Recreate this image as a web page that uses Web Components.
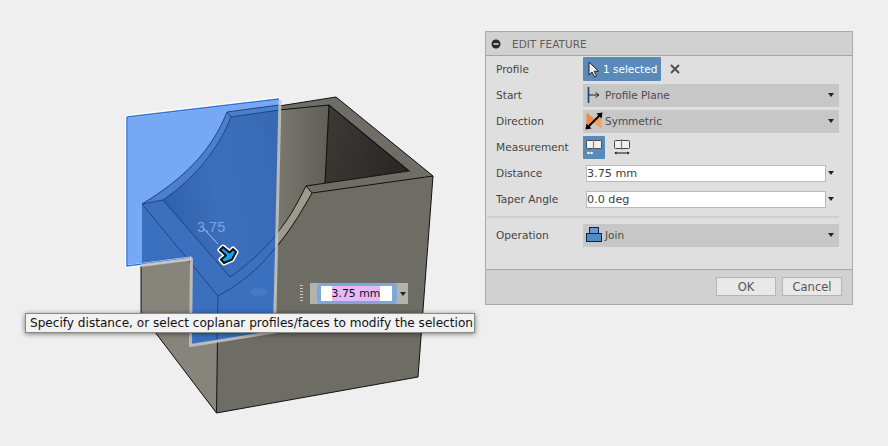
<!DOCTYPE html>
<html><head><meta charset="utf-8"><style>
html,body{margin:0;padding:0;background:#efefef;width:888px;height:446px;overflow:hidden;font-family:"DejaVu Sans",sans-serif}
</style></head><body>
<x-scene></x-scene>
<x-mini value="3.75 mm"></x-mini>
<x-tip>Specify distance, or select coplanar profiles/faces to modify the selection</x-tip>
<x-panel title="EDIT FEATURE">
  <x-row label="Profile"><x-chip>1 selected</x-chip></x-row>
  <x-row label="Start"><x-select icon="start">Profile Plane</x-select></x-row>
  <x-row label="Direction"><x-select icon="sym">Symmetric</x-select></x-row>
  <x-row label="Measurement"><x-measure></x-measure></x-row>
  <x-row label="Distance"><x-field>3.75 mm</x-field></x-row>
  <x-row label="Taper Angle"><x-field>0.0 deg</x-field></x-row>
  <x-sep></x-sep>
  <x-row label="Operation"><x-select icon="join">Join</x-select></x-row>
</x-panel>
<script>
const ICONS={
start:`<svg width="16" height="18" viewBox="0 0 16 18"><path d="M2.500 1v16" stroke="#1d3f6e" stroke-width="1.600"/><path d="M3 9h9" stroke="#222" stroke-width="1"/><path d="M9.500 6.500 13 9l-3.500 2.500" fill="none" stroke="#222" stroke-width="1"/></svg>`,
sym:`<svg width="18" height="18" viewBox="0 0 18 18"><path d="M1.500 .5 11 8 3.500 15 1.500 13Z" fill="#f08c42"/><path d="M16.500 16.500 7 10 14 3 16.500 4Z" fill="#f3a066"/><path d="M3.500 14.500 14.500 3.500" stroke="#000" stroke-width="2"/><path d="M.5 17.500 1.500 11.500 6.500 16.500ZM17.500 .5 11.500 1.500 16.500 6.500Z" fill="#000"/></svg>`,
join:`<svg width="18" height="18" viewBox="0 0 18 18"><rect x="4.500" y="1.500" width="9" height="8" fill="#5f9bd6" stroke="#0f2438"/><rect x="1.500" y="7.500" width="15" height="8" fill="#4f8cc9" stroke="#0f2438"/></svg>`};
function def(name,html,init){customElements.define(name,class extends HTMLElement{constructor(){super();this.attachShadow({mode:"open"}).innerHTML=typeof html==="function"?html(this):html;}connectedCallback(){if(init)init(this)}})}
const caret=`<svg width="6" height="4" viewBox="0 0 6 4"><path d="M0 0h6L3 4Z" fill="#222"/></svg>`;

def("x-scene",`<style>:host{position:absolute;left:0;top:0;width:888px;height:446px;display:block}svg{display:block}</style>
<svg width="888" height="446" viewBox="0 0 888 446">
<defs>
<linearGradient id="inner" x1="0" y1="0" x2="1" y2="0"><stop offset="0" stop-color="#7a7970"/><stop offset="1" stop-color="#5f5e57"/></linearGradient>
<linearGradient id="pit" x1="0" y1="0" x2="1" y2="0.300"><stop offset="0" stop-color="#3c3b36"/><stop offset="1" stop-color="#2a2925"/></linearGradient>
<linearGradient id="floor" x1="0" y1="0.600" x2="1" y2="0.300"><stop offset="0" stop-color="#2f60ac"/><stop offset=".45" stop-color="#3c6fbb"/><stop offset="1" stop-color="#386ab4"/></linearGradient>
</defs>
<path d="M281 110 336 97 433 176 418 377 216.500 413 155 332 141 314V204Z" fill="#6d6c65"/>
<path d="M141 262V314L155 332 216.500 413 218 296 190 250Z" fill="#87857b"/>
<path d="M281 110 329 105 325 183 306 186C296 206 288 220 277 233Z" fill="url(#inner)"/>
<path d="M329 105 409 171 325 183Z" fill="url(#pit)"/>
<path d="M279 106 336 97 433 176 312 193 306 186 409 171 329 105 279 110Z" fill="#6f6e66"/>
<path d="M306 186 312 193C298 218 288 233 276 246V233C288 220 296 206 306 186Z" fill="#9e9b8c"/>
<g fill="none" stroke="#111" stroke-width="1">
<path d="M279 106 336 97 433 176M312 193 433 176"/>
<path d="M279 110 329 105 409 171 306 186M329 105 325 183" stroke-width="1.100"/>
<path d="M306 186 312 193"/>
<path d="M306 186C296 206 288 220 277 233M312 193C298 218 288 233 277 246"/>
<path d="M433 176 418 377 216.500 413 155 332"/>
<path d="M141 262V314L155 332"/>
<path d="M218 296 216.500 413"/>
</g>
<path d="M127 117 279 99 273 332 190 345 192 258 127 266Z" fill="#76a8f6"/>
<path d="M227 112 279 105 273 332 190 345 192 258 142 264V204C185 178 212 150 227 112Z" fill="#3b70bf"/>
<path d="M231 117 279 110 276 235C262 252 246 266 230 277L163 200C195 178 218 150 231 117Z" fill="url(#floor)"/>
<path d="M227 112 279 105V110L231 117ZM227 112C212 150 185 178 142 204L163 200C195 178 218 150 231 117Z" fill="#4a7fcb"/>
<g fill="none" stroke="#1d3f7e" stroke-width=".9">
<path d="M227 112 279 105M231 117 279 110M227 112 231 117"/>
<path d="M227 112C212 150 185 178 142 204M231 117C218 150 195 178 163 200"/>
<path d="M142 204 163 200M142 204 218 296M163 200 230 277"/>
<path d="M230 277C246 266 262 252 276 235M218 296C240 284 258 270 276 247"/>
<path d="M218 296 216.800 342"/>
</g>
<ellipse cx="259" cy="292" rx="9" ry="4" fill="#5f8dd0" opacity=".35"/>
<path d="M126.500 116.500 280 98M126.500 116.500V266.500L191.500 258" fill="none" stroke="#fff" stroke-opacity=".85" stroke-width="3" stroke-linejoin="round"/>
<path d="M127 117 279 99M127 117V266L190 258" fill="none" stroke="#2d72d8" stroke-width="1.500"/>
<path d="M280 100 274.500 332 190.500 345.500 191.500 259 141 265.500" fill="none" stroke="#c8c7c0" stroke-opacity=".85" stroke-width="3" stroke-linejoin="round"/>
<text x="197" y="232" font-family="Liberation Sans" font-size="14.500" fill="#7fa3dd">3.75</text>
<path d="M204 229 218 244" stroke="#a9c4ec" stroke-width="1"/>
<g stroke-linejoin="round" stroke-linecap="round">
<path id="a" d="M220 250 223 247 229.500 252.500 233 249 236 252 232 259.500 224 263 221 259.500 226 255.500Z" fill="#1ba1e2" stroke="#fff" stroke-width="5"/>
<path d="M220 250 223 247 229.500 252.500 233 249 236 252 232 259.500 224 263 221 259.500 226 255.500Z" fill="#1ba1e2" stroke="#05121c" stroke-width="2"/>
</g>
</svg>`);

def("x-mini",el=>`<style>:host{position:absolute;left:310px;top:283px;width:98px;height:21px;display:flex;align-items:stretch;background:#b3b3ad;box-sizing:border-box;padding-left:7px}
.f{width:80px;box-sizing:border-box;background:#fff;border:4px solid #7ca9da;border-width:3px 5px 3px 4px;border-radius:4px;display:flex;align-items:center;justify-content:center;padding-right:1px}
span{background:#e6b8f8;color:#111;font:10.900px/15px "DejaVu Sans",sans-serif;white-space:nowrap}
.c{flex:1;display:flex;align-items:center;justify-content:center}
.grip{position:absolute;left:-10px;top:2px;width:3px;height:18px;background:repeating-linear-gradient(#c9c9c2 0 1px,transparent 1px 3px)}
</style><div class="grip"></div><div class="f"><span>${el.getAttribute("value")}</span></div><div class="c">${caret}</div>`);

def("x-tip",`<style>:host{position:absolute;left:25px;top:313px;width:450px;height:20px;box-sizing:border-box;display:flex;align-items:center;padding-left:4px;background:#f2f2f2;border:1px solid #8a8a84;color:#111;font:12.100px "DejaVu Sans",sans-serif;white-space:nowrap;box-shadow:0 1px 5px rgba(0,0,0,.5)}</style><slot></slot>`);

def("x-panel",el=>`<style>:host{position:absolute;left:485px;top:31px;width:368px;height:274px;box-sizing:border-box;display:flex;flex-direction:column;background:#dfdfdf;border:1px solid #a9a9a9;color:#444;font:10.600px "DejaVu Sans",sans-serif}
header{height:23px;flex:none;background:#d1d1d1;border-bottom:1px solid #a6a6a6;display:flex;align-items:center;gap:11px;padding-left:5px;color:#5e5e5e;font-size:10.500px}
main{flex:1;display:flex;flex-direction:column}
footer{height:35px;flex:none;box-sizing:border-box;background:#d1d1d1;border-top:1px solid #a6a6a6;display:flex;justify-content:flex-end;align-items:center;gap:6px;padding:0 10px 1px 0}
b{font-weight:normal;width:60px;height:19px;box-sizing:border-box;background:#e8e8e8;border:1px solid #b5b5b5;display:flex;align-items:center;justify-content:center;font-size:11.500px;color:#555}
svg{display:block}
</style><header><svg width="10" height="10" viewBox="0 0 10 10"><circle cx="5" cy="5" r="4.500" fill="#2b2b2b"/><path d="M2.500 5h5" stroke="#eee" stroke-width="1.400"/></svg><span>${el.getAttribute("title")}</span></header><main><slot></slot></main><footer><b>OK</b><b>Cancel</b></footer>`);

def("x-row",el=>`<style>:host{display:grid;grid-template-columns:87px 256px;height:26px;padding-left:10px;align-items:center}
label{white-space:nowrap;font-size:10.600px;color:#444}</style><label>${el.getAttribute("label")}</label><slot></slot>`);

def("x-chip",`<style>:host{display:flex;align-items:center;gap:9px}
.c{width:78px;height:24px;box-sizing:border-box;background:#5a8ab8;border-radius:1px;display:flex;align-items:center;padding-left:5px;gap:4px;color:#fff;font-size:10.500px;white-space:nowrap}
svg{display:block}</style><div class="c"><svg width="11" height="17" viewBox="0 0 11 17"><path d="M1 1V14L4 11 6.500 16 8.500 15 6.200 10.300H10.500Z" fill="#eee" stroke="#222" stroke-width="1"/></svg><slot></slot></div><svg width="10" height="10" viewBox="0 0 10 10"><path d="M1 1 9 9M9 1 1 9" stroke="#4c4c4c" stroke-width="1.800"/></svg>`);

def("x-select",el=>`<style>:host{display:flex;align-items:center;height:23px;background:#c7c7c7;padding:0 4px 0 2px;gap:2px;color:#4a4a4a;font-size:10.500px;white-space:nowrap}
i{flex:none;display:flex;width:18px;justify-content:center}span{flex:1}svg{display:block}.c{margin-right:1px}</style><i>${ICONS[el.getAttribute("icon")]}</i><span><slot></slot></span><div class="c">${caret}</div>`);

def("x-measure",`<style>:host{display:flex;align-items:center;gap:6px;height:23px}
div{width:22px;height:23px;display:flex;align-items:center;justify-content:center;border-radius:1px}
.on{background:#5a8ab8}svg{display:block}</style>
<div class="on"><svg width="16" height="16" viewBox="0 0 16 16"><rect x=".5" y="1.500" width="15" height="8" rx="1" fill="#eef0f2" stroke="#333" stroke-opacity=".8"/><path d="M7.500 0v11" stroke="#d9662c" stroke-width="1.200"/><path d="M1 14h6" stroke="#fff"/><path d="M1 14 3 12.500V15.500ZM7 14 5 12.500V15.500Z" fill="#fff"/></svg></div>
<div><svg width="16" height="16" viewBox="0 0 16 16"><rect x=".5" y="1.500" width="15" height="8" rx="1" fill="#eef0f2" stroke="#444"/><path d="M7.500 0v11" stroke="#d9662c" stroke-width="1.200"/><path d="M1 14h14" stroke="#111"/><path d="M.5 14 2.500 12.500V15.500ZM15.500 14 13.500 12.500V15.500Z" fill="#111"/></svg></div>`);

def("x-field",`<style>:host{display:flex;align-items:center;height:18px;margin-left:3px;width:253px}
.f{width:240px;height:17px;box-sizing:border-box;background:#fff;border:1px solid #b9b9b9;display:flex;align-items:center;color:#3c3c3c;font-size:11.200px;white-space:nowrap}
.c{flex:1;display:flex;justify-content:center;padding-right:3px}svg{display:block}</style><div class="f"><slot></slot></div><div class="c">${caret}</div>`);

def("x-sep",`<style>:host{display:block;height:2px;background:#cfcfcf;margin:4px 13px 4px 1px}</style>`);
</script>
</body></html>
